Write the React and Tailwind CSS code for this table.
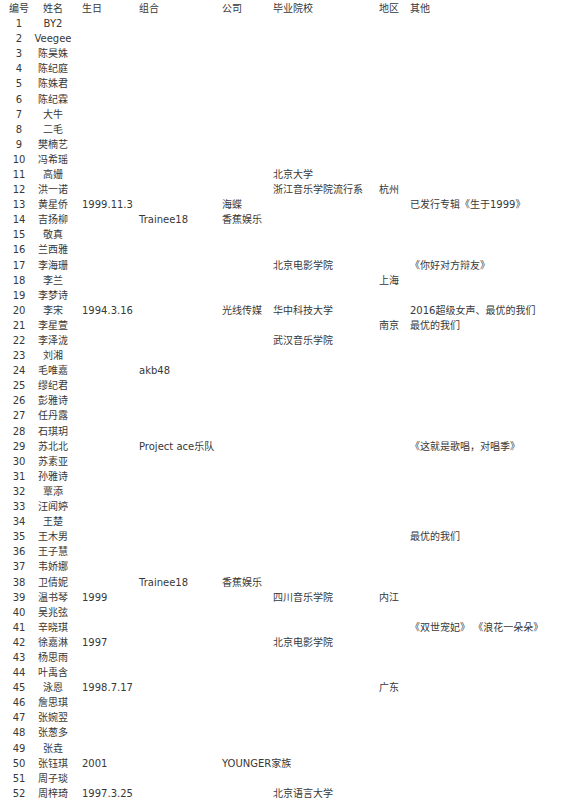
import React from "react";

const names = [
  "BY2","Veegee","陈昊姝","陈纪庭","陈姝君","陈纪霖","大牛","二毛","樊楠艺","冯希瑶",
  "高姗","洪一诺","黄星侨","吉扬柳","敬真","兰西雅","李海珊","李兰","李梦诗","李宋",
  "李星萱","李泽泷","刘湘","毛唯嘉","缪纪君","彭雅诗","任丹露","石琪玥","苏北北","苏素亚",
  "孙雅诗","覃添","汪闻婷","王楚","王木男","王子慧","韦娇娜","卫倩妮","温书琴","吴兆弦",
  "辛晓琪","徐嘉淋","杨思雨","叶禹含","泳恩","詹思琪","张婉翌","张葱多","张垚","张钰琪",
  "周子琰","周梓琦"
];

const extra = {
  11: { school: "北京大学" },
  12: { school: "浙江音乐学院流行系", area: "杭州" },
  13: { birth: "1999.11.3", company: "海蝶", other: "已发行专辑《生于1999》" },
  14: { group: "Trainee18", company: "香蕉娱乐" },
  17: { school: "北京电影学院", other: "《你好对方辩友》" },
  18: { area: "上海" },
  20: { birth: "1994.3.16", company: "光线传媒", school: "华中科技大学", other: "2016超级女声、最优的我们" },
  21: { area: "南京", other: "最优的我们" },
  22: { school: "武汉音乐学院" },
  24: { group: "akb48" },
  29: { group: "Project ace乐队", other: "《这就是歌唱，对唱季》" },
  35: { other: "最优的我们" },
  38: { group: "Trainee18", company: "香蕉娱乐" },
  39: { birth: "1999", school: "四川音乐学院", area: "内江" },
  41: { other: "《双世宠妃》 《浪花一朵朵》" },
  42: { birth: "1997", school: "北京电影学院" },
  45: { birth: "1998.7.17", area: "广东" },
  50: { birth: "2001", company: "YOUNGER家族" },
  52: { birth: "1997.3.25", school: "北京语言大学" },
};

const gridCls =
  "grid grid-cols-[38px_30px_71px_83px_51px_106px_31px_1fr] items-center whitespace-pre";

function Row({ cells, h }) {
  return (
    <div className={gridCls + " " + h}>
      <div className="flex justify-center">{cells[0]}</div>
      <div className="flex justify-center">{cells[1]}</div>
      <div className="pl-[14px]">{cells[2]}</div>
      <div>{cells[3]}</div>
      <div>{cells[4]}</div>
      <div>{cells[5]}</div>
      <div>{cells[6]}</div>
      <div>{cells[7]}</div>
    </div>
  );
}

export default function App() {
  return (
    <div
      className="w-[562px] h-[807px] overflow-hidden bg-white text-[#383838] text-[10px] pt-[1px]"
      style={{ fontFamily: '"DejaVu Sans", "Noto Sans CJK SC", sans-serif' }}
    >
      <Row
        h="h-[15px]"
        cells={["编号", "姓名", "生日", "组合", "公司", "毕业院校", "地区", "其他"]}
      />
      {names.map((n, i) => {
        const e = extra[i + 1] || {};
        return (
          <Row
            key={i}
            h="h-[15.1px]"
            cells={[
              String(i + 1),
              n,
              e.birth || "",
              e.group || "",
              e.company || "",
              e.school || "",
              e.area || "",
              e.other || "",
            ]}
          />
        );
      })}
    </div>
  );
}
